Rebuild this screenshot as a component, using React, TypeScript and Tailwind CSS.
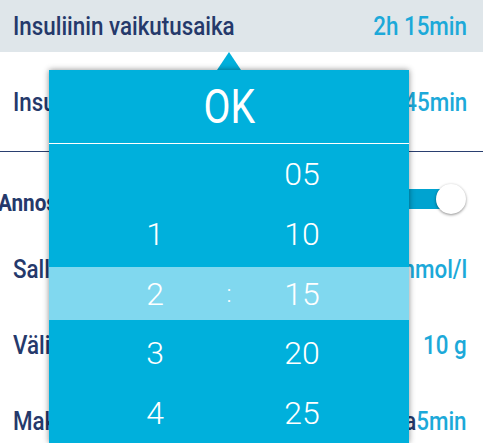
import React from 'react';

const hours = ['', '1', '2', '3', '4'];
const minutes = ['05', '10', '15', '20', '25'];

function Label({ children, bold }: { children: React.ReactNode; bold?: boolean }) {
  return (
    <span
      className={`inline-block origin-left scale-x-[0.86] whitespace-nowrap text-[#25396b] ${
        bold ? 'text-[24px] font-bold' : 'text-[26px] font-medium'
      }`}
    >
      {children}
    </span>
  );
}

function Value({ children }: { children: React.ReactNode }) {
  return (
    <span className="inline-block origin-right scale-x-[0.86] whitespace-nowrap text-[26px] font-medium text-[#1ca9d9]">
      {children}
    </span>
  );
}

export default function App() {
  return (
    <div className="relative h-[443px] w-[483px] overflow-hidden bg-white font-['Roboto',sans-serif] leading-none">
      {/* Taustalla oleva asetuslista */}
      <div className="flex h-[52px] items-center justify-between bg-[#dfe6ea] pl-[13px] pr-[16px]">
        <Label>Insuliinin vaikutusaika</Label>
        <Value>2h 15min</Value>
      </div>
      <div className="flex h-[99px] items-center justify-between pl-[13px] pr-[16px]">
        <Label>Insuliinin viive</Label>
        <Value>45min</Value>
      </div>
      <div className="h-px bg-[#2a3f70]" />
      <div className="flex h-[79px] items-center justify-between pl-0 pr-[17px] pt-[23px]">
        <span className="-ml-[2px]">
          <Label bold>Annosneuvoja</Label>
        </span>
        <div className="relative -mt-[8px] h-[30px] w-[70px]">
          <div className="absolute left-0 right-[10px] top-[5px] h-[20px] rounded-full bg-[#00a3d0]" />
          <div className="absolute right-0 top-0 h-[30px] w-[30px] rounded-full bg-white shadow-[0_1px_3px_rgba(0,0,0,0.45)]" />
        </div>
      </div>
      <div className="flex h-[76px] items-center justify-between pl-[13px] pr-[16px]">
        <Label>Sallittu vaihtelu</Label>
        <Value>1,0 mmol/l</Value>
      </div>
      <div className="flex h-[76px] items-center justify-between pl-[13px] pr-[16px]">
        <Label>Välipala</Label>
        <Value>10 g</Value>
      </div>
      <div className="flex h-[76px] items-center justify-between pl-[13px] pr-[16px]">
        <Label>Maksimi</Label>
        <span className="inline-block origin-right scale-x-[0.86] whitespace-nowrap text-[26px] font-medium">
          <span className="text-[#25396b]">a</span>
          <span className="text-[#1ca9d9]">5min</span>
        </span>
      </div>

      {/* Aikavalitsin */}
      <div className="absolute left-[217px] top-[52px] h-0 w-0 border-b-[18px] border-l-[12px] border-r-[12px] border-b-[#00b0dc] border-l-transparent border-r-transparent" />
      <div className="absolute left-[49px] top-[70px] w-[360px] bg-[#00b0dc] shadow-[0_0_6px_rgba(0,0,0,0.45)]">
        <div className="flex h-[73px] items-center justify-center">
          <span className="inline-block scale-x-[0.8] text-[49px] font-normal text-white">OK</span>
        </div>
        <div className="h-px bg-white" />
        {minutes.map((m, i) =>
          i === 2 ? (
            <div key={m} className="py-[3px]">
              <div className="flex h-[53px] items-center bg-[#80d8ef] pl-[46px] text-[32px] font-light text-white">
                <span className="w-[120px] text-center">{hours[i]}</span>
                <span className="w-[28px] text-center text-[24px]">:</span>
                <span className="w-[118px] text-center">{m}</span>
              </div>
            </div>
          ) : (
            <div key={m} className="flex h-[60px] items-center pl-[46px] text-[32px] font-light text-white">
              <span className="w-[120px] text-center">{hours[i]}</span>
              <span className="w-[28px]" />
              <span className="w-[118px] text-center">{m}</span>
            </div>
          )
        )}
      </div>
    </div>
  );
}
